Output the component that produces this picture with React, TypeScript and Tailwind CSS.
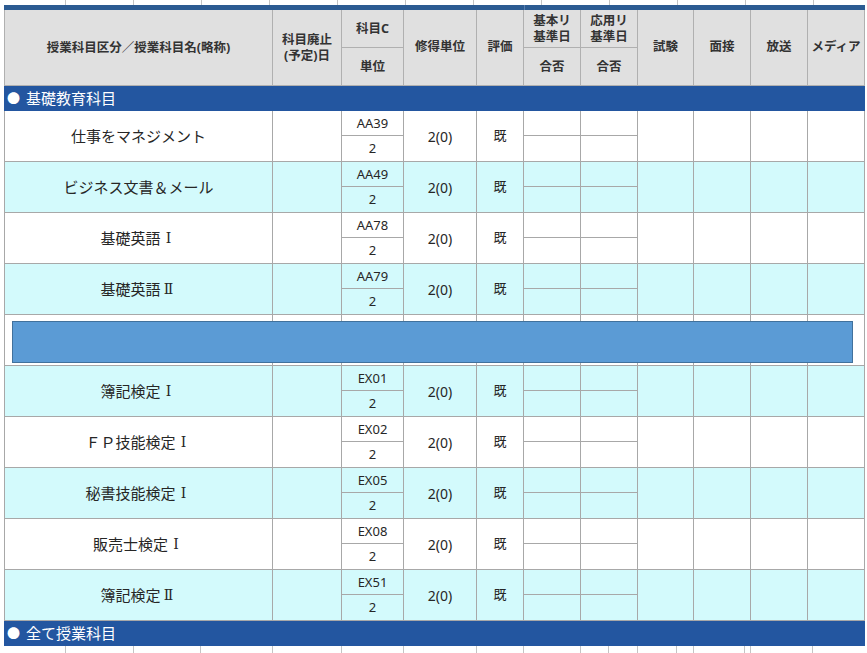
import React from "react";

const COLS =
  "grid grid-cols-[269px_69px_62px_73px_47px_57px_57px_56px_57px_57px_57px]";
const LINE = "border-[#a8a8a8]";

type Row = { name: React.ReactNode; code: string; cyan: boolean };

const Roman = ({ n }: { n: string }) => (
  <span className="inline-block w-[16px] text-center font-['DejaVu_Serif','Noto_Sans_CJK_JP',serif] text-[14px]">
    {n}
  </span>
);

const rowsA: Row[] = [
  { name: "仕事をマネジメント", code: "AA39", cyan: false },
  { name: "ビジネス文書＆メール", code: "AA49", cyan: true },
  { name: <>基礎英語<Roman n="Ⅰ" /></>, code: "AA78", cyan: false },
  { name: <>基礎英語<Roman n="Ⅱ" /></>, code: "AA79", cyan: true },
];

const rowsB: Row[] = [
  { name: <>簿記検定<Roman n="Ⅰ" /></>, code: "EX01", cyan: true },
  { name: <>ＦＰ技能検定<Roman n="Ⅰ" /></>, code: "EX02", cyan: false },
  { name: <>秘書技能検定<Roman n="Ⅰ" /></>, code: "EX05", cyan: true },
  { name: <>販売士検定<Roman n="Ⅰ" /></>, code: "EX08", cyan: false },
  { name: <>簿記検定<Roman n="Ⅱ" /></>, code: "EX51", cyan: true },
];

function DataRow({ row }: { row?: Row }) {
  const bg = row && row.cyan ? "bg-[#d3fafc]" : "bg-white";
  const c = `border-r border-b ${LINE} flex items-center justify-center`;
  return (
    <div className={`${COLS} grid-rows-[25px_26px] ${bg} text-[#262626]`}>
      <div className={`${c} border-l col-start-1 row-start-1 row-span-2 text-[15px]`}>
        {row?.name}
      </div>
      <div className={`${c} col-start-2 row-start-1 row-span-2`} />
      <div className={`${c} col-start-3 row-start-1 text-[13px] pt-[2px]`}>{row?.code}</div>
      <div className={`${c} col-start-3 row-start-2 text-[13px]`}>{row ? "2" : ""}</div>
      <div className={`${c} col-start-4 row-start-1 row-span-2 text-[14px]`}>
        {row ? "2(0)" : ""}
      </div>
      <div className={`${c} col-start-5 row-start-1 row-span-2 text-[13px]`}>
        {row ? "既" : ""}
      </div>
      <div className={`${c} col-start-6 row-start-1`} />
      <div className={`${c} col-start-6 row-start-2`} />
      <div className={`${c} col-start-7 row-start-1`} />
      <div className={`${c} col-start-7 row-start-2`} />
      <div className={`${c} col-start-8 row-start-1 row-span-2`} />
      <div className={`${c} col-start-9 row-start-1 row-span-2`} />
      <div className={`${c} col-start-10 row-start-1 row-span-2`} />
      <div className={`${c} col-start-11 row-start-1 row-span-2`} />
    </div>
  );
}

function GroupBar({ label }: { label: string }) {
  return (
    <div className="h-[25px] bg-[#2356a0] text-white flex items-center pl-[3px] text-[15px] leading-none">
      <span className="text-[13px] mr-[6px]">●</span>
      <span>{label}</span>
    </div>
  );
}

function Ticks({ widths }: { widths: number[] }) {
  return (
    <div className="flex h-full">
      {widths.map((w, i) => (
        <div
          key={i}
          className="h-full border-r border-[#c4c4c4] shrink-0"
          style={{ width: w }}
        />
      ))}
    </div>
  );
}

export default function App() {
  const h = `border-r border-b border-[#b0b0b0] flex items-center justify-center text-center`;
  return (
    <div className="w-[867px] h-[653px] bg-white overflow-hidden font-['Noto_Sans','Noto_Sans_CJK_JP',sans-serif]">
      {/* top stub of previous table */}
      <div className="h-[5px]">
        <Ticks widths={[66, 68, 68, 68, 68, 68, 68, 68, 68, 68, 68, 68]} />
      </div>
      <div className="ml-[4px] w-[861px] h-[5px] bg-[#2c5b92] flex">
        <div className="w-[520px] h-full" />
        <div className="w-[1px] h-full bg-[#5a7fae]" />
      </div>

      <div className="ml-[4px] w-[861px]">
        {/* header */}
        <div
          className={`${COLS} grid-rows-[38px_38px] bg-[#e0e0e0] text-[#333] font-bold text-[12.5px] leading-[16px]`}
        >
          <div className={`${h} border-l col-start-1 row-start-1 row-span-2`}>
            授業科目区分／授業科目名(略称)
          </div>
          <div className={`${h} col-start-2 row-start-1 row-span-2`}>
            科目廃止
            <br />
            (予定)日
          </div>
          <div className={`${h} col-start-3 row-start-1`}>科目C</div>
          <div className={`${h} col-start-3 row-start-2`}>単位</div>
          <div className={`${h} col-start-4 row-start-1 row-span-2 pb-[2px]`}>修得単位</div>
          <div className={`${h} col-start-5 row-start-1 row-span-2 pb-[2px]`}>評価</div>
          <div className={`${h} col-start-6 row-start-1`}>
            基本リ
            <br />
            基準日
          </div>
          <div className={`${h} col-start-6 row-start-2`}>合否</div>
          <div className={`${h} col-start-7 row-start-1`}>
            応用リ
            <br />
            基準日
          </div>
          <div className={`${h} col-start-7 row-start-2`}>合否</div>
          <div className={`${h} col-start-8 row-start-1 row-span-2 pb-[2px]`}>試験</div>
          <div className={`${h} col-start-9 row-start-1 row-span-2 pb-[2px]`}>面接</div>
          <div className={`${h} col-start-10 row-start-1 row-span-2 pb-[2px]`}>放送</div>
          <div className={`${h} col-start-11 row-start-1 row-span-2 pb-[2px]`}>メディア</div>
        </div>

        <GroupBar label="基礎教育科目" />

        {rowsA.map((r, i) => (
          <DataRow key={`a${i}`} row={r} />
        ))}

        <div className="relative">
          <DataRow />
          <div className="absolute left-[8px] top-[6px] w-[841px] h-[42px] bg-[#5b9bd5] border border-[#41719c]" />
        </div>

        {rowsB.map((r, i) => (
          <DataRow key={`b${i}`} row={r} />
        ))}

        <GroupBar label="全て授業科目" />
      </div>

      {/* bottom stub of next table */}
      <div className="h-[7px]">
        <Ticks widths={[66, 68, 67, 72, 69, 62, 73, 47, 57, 28, 29, 39, 17, 51, 6, 62]} />
      </div>
    </div>
  );
}
